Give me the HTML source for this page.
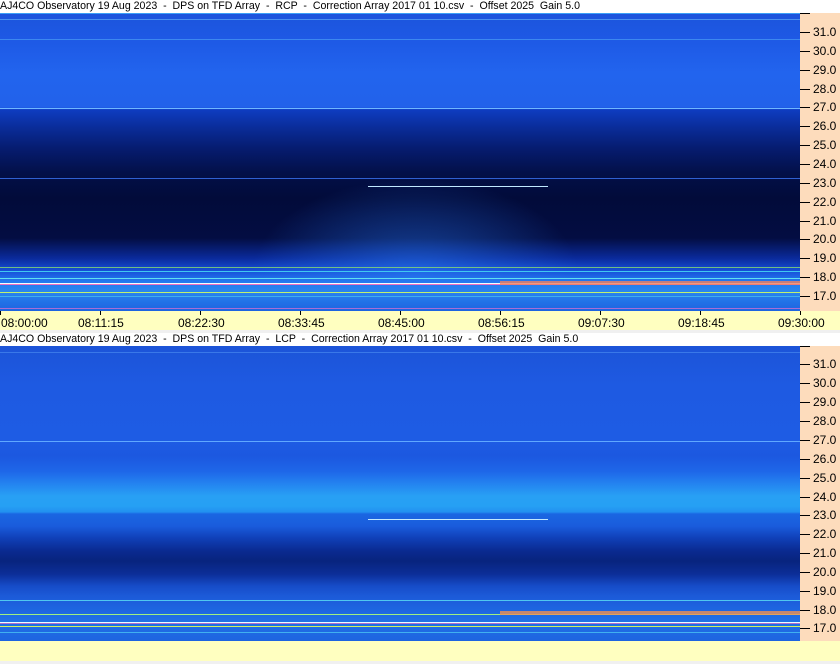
<!DOCTYPE html>
<html><head><meta charset="utf-8"><style>
body{margin:0;width:840px;height:664px;position:relative;background:#f0f0f0;font-family:"Liberation Sans",Arial,sans-serif;font-size:12px;overflow:hidden}
.a{position:absolute}
.title{left:0;width:840px;height:13px;background:#fff;line-height:13px;font-size:10.6px;white-space:pre;color:#000}
.ax{left:800px;width:40px;background:#fddcbc}
.tk{position:absolute;left:0;width:10px;height:1px;background:#000}
.lb{position:absolute;left:13px;font-size:12px;line-height:14px}
.time{left:0;width:840px;height:19px;background:#ffffc0}
.tt{position:absolute;top:0;width:1px;height:4px;background:#000}
.tl{position:absolute;top:5px;font-size:12px;line-height:14px}
.sp{left:0;width:800px;overflow:hidden}
.ln{position:absolute;left:0;width:800px;height:1px}
</style></head><body>

<div class="a title" style="top:0">AJ4CO Observatory 19 Aug 2023  -  DPS on TFD Array  -  RCP  -  Correction Array 2017 01 10.csv  -  Offset 2025  Gain 5.0</div>

<div class="a sp" style="top:13px;height:298px;background:linear-gradient(#1c54dc 0px,#1e5ae6 30px,#2264ee 60px,#2262ea 94px,#0e3cc0 97px,#0a2c98 115px,#061c70 135px,#031048 160px,#020b3a 185px,#030d42 225px,#0a2a9a 245px,#1650d8 258px,#2478ee 268px,#2a86f0 278px,#2070e6 290px,#1e64e0 298px)">
 <div class="a" style="left:250px;top:165px;width:330px;height:120px;background:radial-gradient(ellipse at 50% 80%,rgba(40,120,240,.55),rgba(40,120,240,0) 70%)"></div>
 <div class="ln" style="top:0;background:#3aa0f8"></div>
 <div class="ln" style="top:6px;background:#4a90f0"></div>
 <div class="ln" style="top:26px;background:#3c88f0"></div>
 <div class="ln" style="top:95px;background:#70b8ff"></div>
 <div class="ln" style="top:165px;background:#3060d0"></div>
 <div class="a" style="left:368px;top:173px;width:180px;height:1px;background:#c0e8ff"></div>
 <div class="ln" style="top:254px;background:#8adc70;opacity:.8"></div>
 <div class="ln" style="top:258px;background:#40c8f0"></div>
 <div class="ln" style="top:265px;background:#60e0f0"></div>
 <div class="ln" style="top:270px;background:#f0ffff"></div>
 <div class="ln" style="top:271px;background:#f070c0"></div>
 <div class="a" style="left:500px;top:268px;width:300px;height:4px;background:#f08060;opacity:.8"></div>
 <div class="ln" style="top:279px;background:#c0f070"></div>
 <div class="ln" style="top:283px;background:#40b0f0"></div>
 <div class="ln" style="top:295px;background:#e070d0;opacity:.7"></div>
</div>

<div class="a ax" style="top:13px;height:298px">
 <div class="tk" style="top:0"></div>
 <div class="tk" style="top:19px"></div><div class="lb" style="top:12px">31.0</div>
 <div class="tk" style="top:38px"></div><div class="lb" style="top:31px">30.0</div>
 <div class="tk" style="top:57px"></div><div class="lb" style="top:50px">29.0</div>
 <div class="tk" style="top:76px"></div><div class="lb" style="top:69px">28.0</div>
 <div class="tk" style="top:94px"></div><div class="lb" style="top:87px">27.0</div>
 <div class="tk" style="top:113px"></div><div class="lb" style="top:106px">26.0</div>
 <div class="tk" style="top:132px"></div><div class="lb" style="top:125px">25.0</div>
 <div class="tk" style="top:151px"></div><div class="lb" style="top:144px">24.0</div>
 <div class="tk" style="top:170px"></div><div class="lb" style="top:163px">23.0</div>
 <div class="tk" style="top:189px"></div><div class="lb" style="top:182px">22.0</div>
 <div class="tk" style="top:208px"></div><div class="lb" style="top:201px">21.0</div>
 <div class="tk" style="top:226px"></div><div class="lb" style="top:219px">20.0</div>
 <div class="tk" style="top:245px"></div><div class="lb" style="top:238px">19.0</div>
 <div class="tk" style="top:264px"></div><div class="lb" style="top:257px">18.0</div>
 <div class="tk" style="top:283px"></div><div class="lb" style="top:276px">17.0</div>
</div>

<div class="a time" style="top:311px">
 <div class="tt" style="left:0"></div><div class="tt" style="left:100px"></div><div class="tt" style="left:200px"></div><div class="tt" style="left:300px"></div><div class="tt" style="left:400px"></div><div class="tt" style="left:500px"></div><div class="tt" style="left:600px"></div><div class="tt" style="left:700px"></div><div class="tt" style="left:800px"></div>
 <div class="tl" style="left:1px">08:00:00</div>
 <div class="tl" style="left:78px">08:11:15</div>
 <div class="tl" style="left:178px">08:22:30</div>
 <div class="tl" style="left:278px">08:33:45</div>
 <div class="tl" style="left:378px">08:45:00</div>
 <div class="tl" style="left:478px">08:56:15</div>
 <div class="tl" style="left:578px">09:07:30</div>
 <div class="tl" style="left:678px">09:18:45</div>
 <div class="tl" style="left:778px">09:30:00</div>
</div>

<div class="a title" style="top:333px">AJ4CO Observatory 19 Aug 2023  -  DPS on TFD Array  -  LCP  -  Correction Array 2017 01 10.csv  -  Offset 2025  Gain 5.0</div>

<div class="a sp" style="top:346px;height:295px;background:linear-gradient(#1c54d8 0px,#1e5ae2 40px,#1e5ce4 94px,#1c58e0 110px,#1e66e8 125px,#2484f0 138px,#28a0f4 150px,#26a0f4 160px,#2290f0 166px,#1a66e2 168px,#1a5cdc 180px,#1040b8 192px,#0a2a90 205px,#08247e 215px,#0c2e98 228px,#164cc8 240px,#1c5ad8 250px,#1e64e0 262px,#2070e6 275px,#1e64e0 295px)">
 <div class="ln" style="top:6px;background:#3a78e8"></div>
 <div class="ln" style="top:95px;background:#60a8ff"></div>
 <div class="a" style="left:368px;top:173px;width:180px;height:1px;background:#c0e8ff"></div>
 <div class="ln" style="top:254px;background:#50c8f0"></div>
 <div class="ln" style="top:268px;background:#a0f080"></div>
 <div class="ln" style="top:276px;background:#e8ffff"></div>
 <div class="ln" style="top:277px;background:#f070c0;opacity:.7"></div>
 <div class="a" style="left:500px;top:265px;width:300px;height:4px;background:#f09050;opacity:.8"></div>
 <div class="ln" style="top:280px;background:#d0f060"></div>
 <div class="ln" style="top:286px;background:#40b0f0"></div>
</div>

<div class="a ax" style="top:346px;height:295px">
 <div class="tk" style="top:0"></div>
 <div class="tk" style="top:18px"></div><div class="lb" style="top:11px">31.0</div>
 <div class="tk" style="top:37px"></div><div class="lb" style="top:30px">30.0</div>
 <div class="tk" style="top:56px"></div><div class="lb" style="top:49px">29.0</div>
 <div class="tk" style="top:75px"></div><div class="lb" style="top:68px">28.0</div>
 <div class="tk" style="top:94px"></div><div class="lb" style="top:87px">27.0</div>
 <div class="tk" style="top:113px"></div><div class="lb" style="top:106px">26.0</div>
 <div class="tk" style="top:132px"></div><div class="lb" style="top:125px">25.0</div>
 <div class="tk" style="top:151px"></div><div class="lb" style="top:144px">24.0</div>
 <div class="tk" style="top:169px"></div><div class="lb" style="top:162px">23.0</div>
 <div class="tk" style="top:188px"></div><div class="lb" style="top:181px">22.0</div>
 <div class="tk" style="top:207px"></div><div class="lb" style="top:200px">21.0</div>
 <div class="tk" style="top:226px"></div><div class="lb" style="top:219px">20.0</div>
 <div class="tk" style="top:245px"></div><div class="lb" style="top:238px">19.0</div>
 <div class="tk" style="top:264px"></div><div class="lb" style="top:257px">18.0</div>
 <div class="tk" style="top:282px"></div><div class="lb" style="top:275px">17.0</div>
</div>

<div class="a time" style="top:641px;height:20px"></div>
</body></html>
